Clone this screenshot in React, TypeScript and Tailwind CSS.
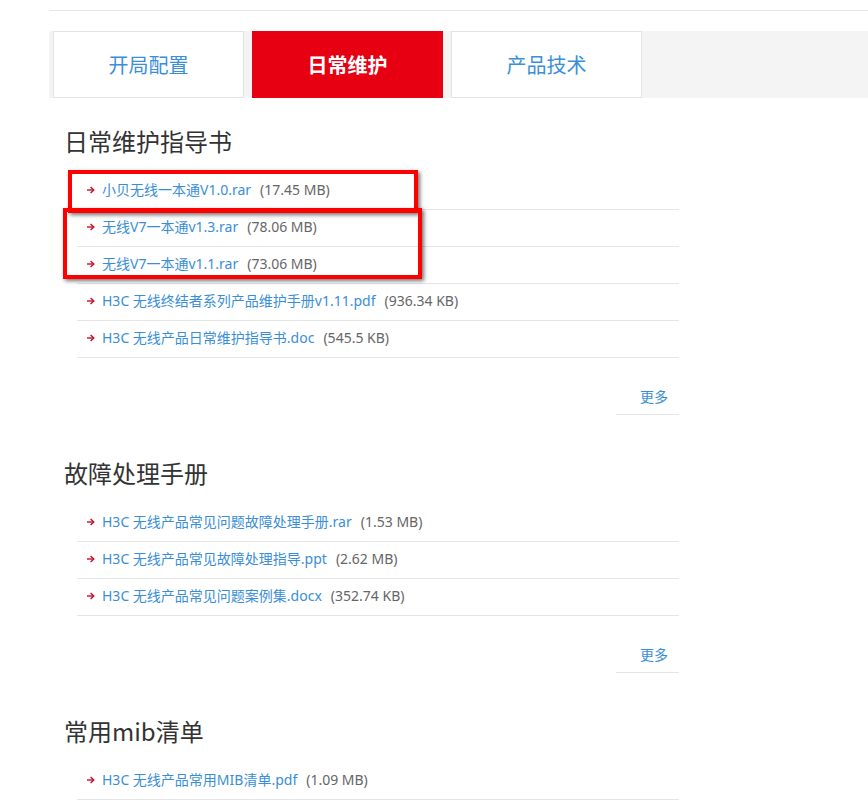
import React from "react";

type Item = { name: string; size: string };

const sections: { title: string; items: Item[]; more: boolean }[] = [
  {
    title: "日常维护指导书",
    more: true,
    items: [
      { name: "小贝无线一本通V1.0.rar", size: "(17.45 MB)" },
      { name: "无线V7一本通v1.3.rar", size: "(78.06 MB)" },
      { name: "无线V7一本通v1.1.rar", size: "(73.06 MB)" },
      { name: "H3C 无线终结者系列产品维护手册v1.11.pdf", size: "(936.34 KB)" },
      { name: "H3C 无线产品日常维护指导书.doc", size: "(545.5 KB)" },
    ],
  },
  {
    title: "故障处理手册",
    more: true,
    items: [
      { name: "H3C 无线产品常见问题故障处理手册.rar", size: "(1.53 MB)" },
      { name: "H3C 无线产品常见故障处理指导.ppt", size: "(2.62 MB)" },
      { name: "H3C 无线产品常见问题案例集.docx", size: "(352.74 KB)" },
    ],
  },
  {
    title: "常用mib清单",
    more: false,
    items: [{ name: "H3C 无线产品常用MIB清单.pdf", size: "(1.09 MB)" }],
  },
];

function Arrow() {
  return (
    <svg width="8" height="8" viewBox="0 0 8 8" className="shrink-0">
      <path d="M0 4 H6.5" stroke="#c3102c" strokeWidth="1.4" fill="none" />
      <path d="M3.6 1 L6.8 4 L3.6 7" stroke="#c3102c" strokeWidth="1.4" fill="none" />
    </svg>
  );
}

export default function App() {
  const font = { fontFamily: '"Liberation Sans", "Noto Sans CJK SC", sans-serif' };
  const cjk = { fontFamily: '"Noto Sans CJK SC", sans-serif' };
  const list = { fontFamily: '"Noto Sans", "Noto Sans CJK SC", sans-serif' };
  return (
    <div className="relative w-[868px] h-[810px] overflow-hidden bg-white pl-[49px] pt-[10px]" style={font}>
      <div className="h-px bg-[#e6e6e6]" />
      <div className="mt-[20px] flex h-[67px] gap-2 bg-[#f4f4f4] pl-[4px]">
        <div className="flex w-[191px] items-center justify-center border border-[#e3e3e3] bg-white text-[20px] text-[#3b8fd8]" style={cjk}>
          开局配置
        </div>
        <div className="flex w-[191px] items-center justify-center bg-[#e60012] text-[20px] font-bold text-white" style={cjk}>
          日常维护
        </div>
        <div className="flex w-[191px] items-center justify-center border border-[#e3e3e3] bg-white text-[20px] text-[#3b8fd8]" style={cjk}>
          产品技术
        </div>
      </div>

      <div className="flex flex-col">
        {sections.map((s, si) => (
          <div key={si} className={si === 0 ? "mt-[25px]" : "mt-[40px]"}>
            <h2 className="pl-[15px] text-[24px] leading-[36px] text-[#333]" style={cjk}>
              {s.title}
            </h2>
            <ul className="mt-[14px] ml-[28px] w-[602px]">
              {s.items.map((it, i) => (
                <li key={i} className="flex h-[37px] items-center gap-[7px] border-b border-[#e6e6e6] pb-[3px] pl-[10px] text-[14px]" style={list}>
                  <Arrow />
                  <span className="text-[#3a8ed8]">{it.name}</span>
                  <span className="ml-[2px] text-[#666]">{it.size}</span>
                </li>
              ))}
            </ul>
            {s.more && (
              <div className="mt-[20px] ml-[28px] flex w-[602px] justify-end">
                <div className="flex h-[37px] w-[63px] items-center justify-end border-b border-[#e6e6e6] pr-[11px] text-[14px] text-[#3a8ed8]" style={cjk}>
                  更多
                </div>
              </div>
            )}
          </div>
        ))}
      </div>

      <div className="absolute left-[68px] top-[170px] h-[43px] w-[350px] border-[4px] border-[#ff0000] shadow-[2px_2px_4px_rgba(0,0,0,0.55)]" />
      <div className="absolute left-[63px] top-[208px] h-[71px] w-[359px] border-[4px] border-[#ff0000] shadow-[2px_2px_4px_rgba(0,0,0,0.55)]" />
    </div>
  );
}
